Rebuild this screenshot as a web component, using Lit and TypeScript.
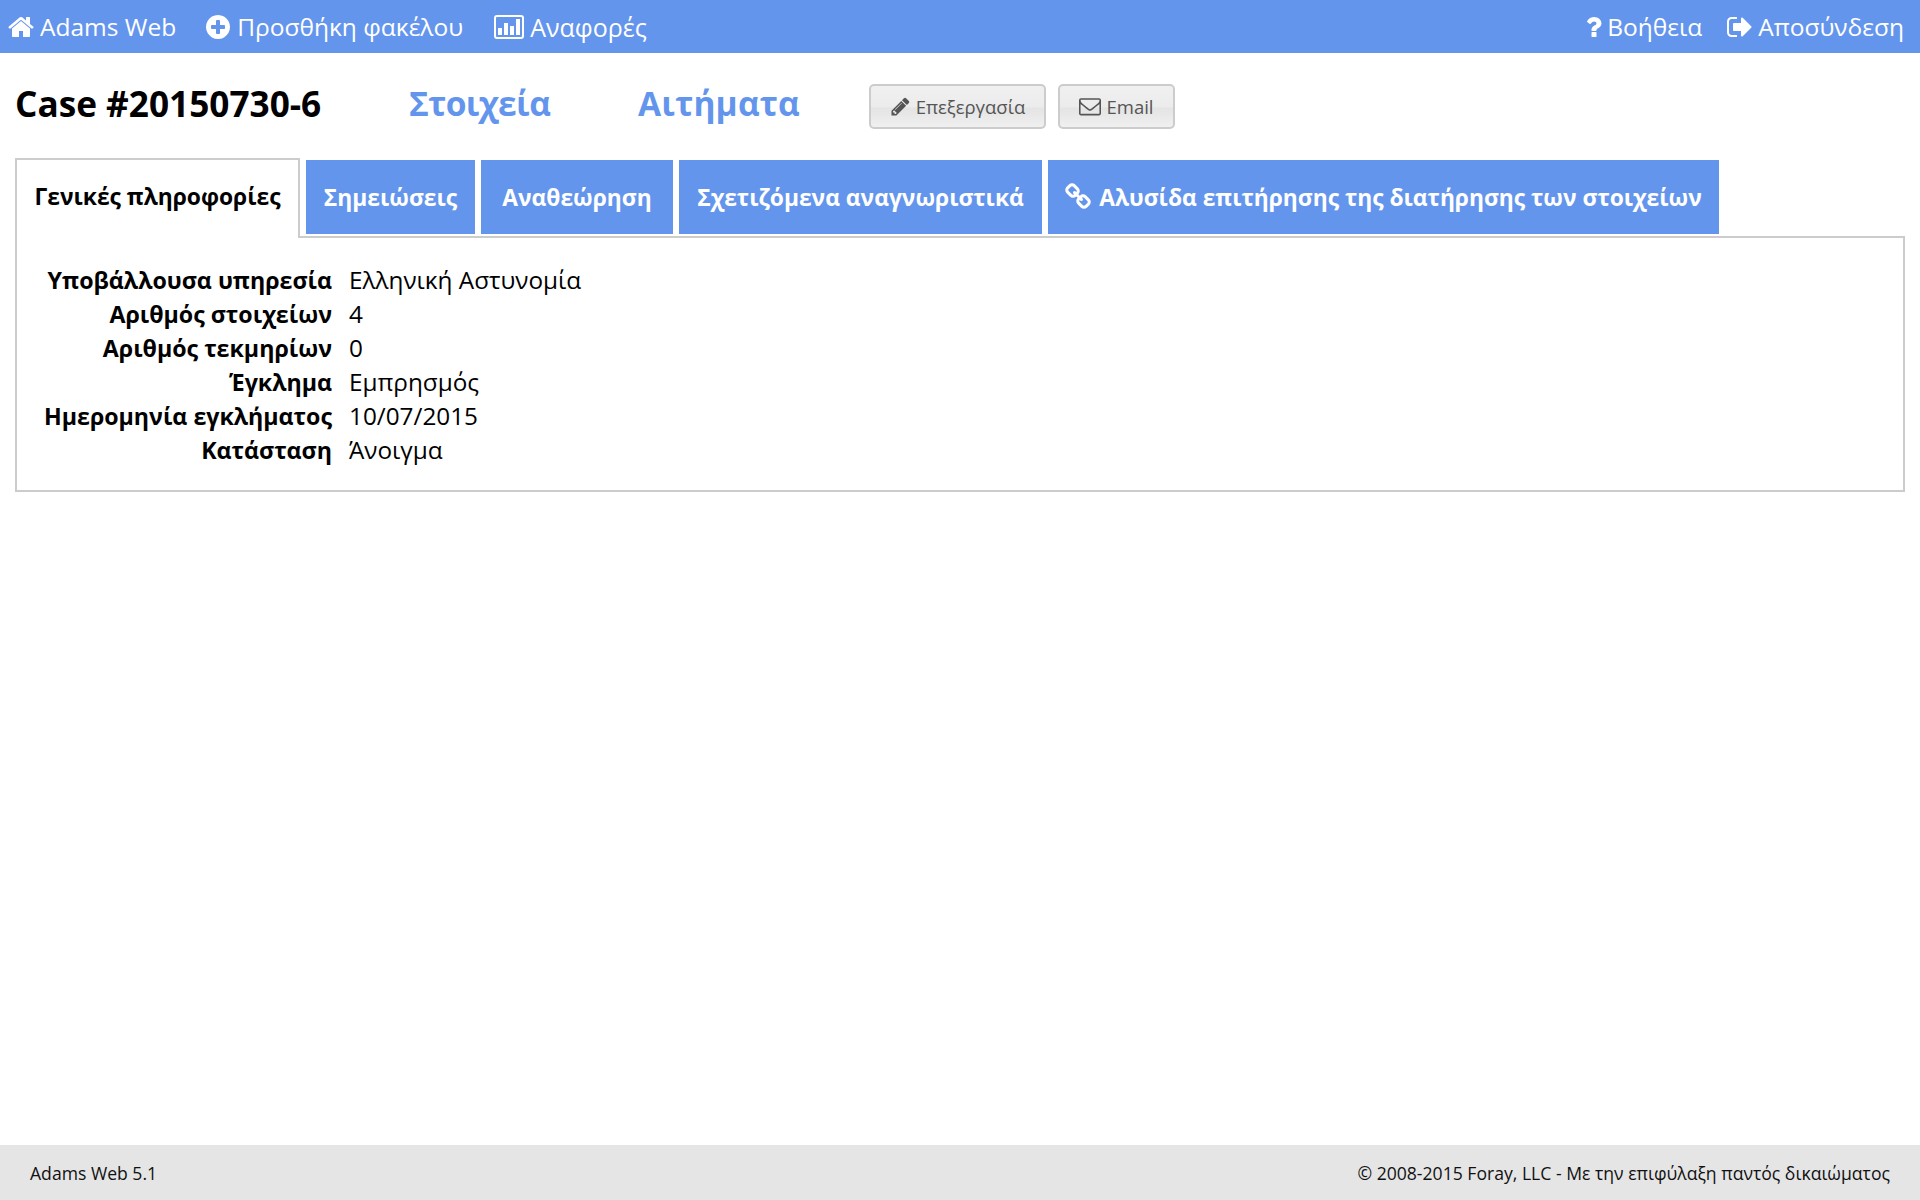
import { LitElement, html, css, svg } from "lit";
import { customElement } from "lit/decorators.js";

const P = {
  home: "M1472 992v480q0 26-19 45t-45 19h-384v-384h-256v384h-384q-26 0-45-19t-19-45v-480q0-1 .5-3t.5-3l575-474 575 474q1 2 1 6zm223-69l-62 74q-8 9-21 11h-3q-13 0-21-7l-692-577-692 577q-12 8-24 7-13-2-21-11l-62-74q-8-10-7-23.5t11-21.5l719-599q32-26 76-26t76 26l244 204v-195q0-14 9-23t23-9h192q14 0 23 9t9 23v408l219 182q10 8 11 21.5t-7 23.5z",
  plus: "M1344 960v-128q0-26-19-45t-45-19h-256v-256q0-26-19-45t-45-19h-128q-26 0-45 19t-19 45v256h-256q-26 0-45 19t-19 45v128q0 26 19 45t45 19h256v256q0 26 19 45t45 19h128q26 0 45-19t19-45v-256h256q26 0 45-19t19-45zm320-64q0 209-103 385.5t-279.5 279.5-385.5 103-385.5-103-279.5-279.5-103-385.5 103-385.5 279.5-279.5 385.5-103 385.5 103 279.5 279.5 103 385.5z",
  question: "M704 1256v240q0 16-12 28t-28 12h-240q-16 0-28-12t-12-28v-240q0-16 12-28t28-12h240q16 0 28 12t12 28zm316-600q0 54-15.500 101t-35 76.500-55 59.500-57.500 43.500-61 35.500q-41 23-68.500 65t-27.500 67q0 17-12 32.500t-28 15.500h-240q-15 0-25.500-18.500t-10.500-37.500v-45q0-83 65-156.500t143-108.500q59-27 84-56t25-76q0-42-46.500-74t-107.500-32q-65 0-108 29-35 25-107 115-13 16-31 16-12 0-25-8l-164-125q-13-10-15.500-25t5.500-28q160-266 464-266 80 0 161 31t146 83 106 127.500 41 158.500z",
  signout: "M704 1440q0 4 1 20t.5 26.500-3 23.500-10 19.500-20.500 6.500h-320q-119 0-203.500-84.500t-84.500-203.500v-704q0-119 84.500-203.500t203.500-84.500h320q13 0 22.500 9.500t9.500 22.500q0 4 1 20t.5 26.500-3 23.500-10 19.500-20.500 6.500h-320q-66 0-113 47t-47 113v704q0 66 47 113t113 47h312l11.500 1 11.500 3 8 5.500 7 9 2 13.500zm928-544q0 26-19 45l-544 544q-19 19-45 19t-45-19-19-45v-288h-448q-26 0-45-19t-19-45v-384q0-26 19-45t45-19h448v-288q0-26 19-45t45-19 45 19l544 544q19 19 19 45z",
  pencil: "M491 1536l91-91-235-235-91 91v107h128v128h107zm523-928q0-22-22-22-10 0-17 7l-542 542q-7 7-7 17 0 22 22 22 10 0 17-7l542-542q7-7 7-17zm-54-192l416 416-832 832h-416v-416zm683 96q0 53-37 90l-166 166-416-416 166-165q36-38 90-38 53 0 91 38l235 234q37 39 37 91z",
  envelope: "M1664 1504v-768q-32 36-69 66-268 206-426 338-51 43-83 67t-86.500 48.500-102.500 24.500h-2q-48 0-102.500-24.500t-86.500-48.500-83-67q-158-132-426-338-37-30-69-66v768q0 13 9.500 22.500t22.500 9.500h1472q13 0 22.500-9.500t9.500-22.500zm0-1051v-24.500l-.5-13-3-12.500-5.500-9-9-7.500-14-2.500h-1472q-13 0-22.500 9.500t-9.500 22.500q0 168 147 284 193 152 401 317 6 5 35 29.500t46 37.500 44.500 31.500 50.500 27.500 43 9h2q20 0 43-9t50.500-27.500 44.500-31.500 46-37.500 35-29.500q208-165 401-317 54-43 100.500-115.500t46.500-131.500zm128-37v1088q0 66-47 113t-113 47h-1472q-66 0-113-47t-47-113v-1088q0-66 47-113t113-47h1472q66 0 113 47t47 113z",
  link: "M1456 1216q0-40-28-68l-208-208q-28-28-68-28-42 0-72 32 3 3 19 18.500t21.500 21.500 15 19 13 25.500 3.500 27.500q0 40-28 68t-68 28q-15 0-27.500-3.500t-25.500-13-19-15-21.500-21.500-18.500-19q-33 31-33 73 0 40 28 68l206 207q27 27 68 27 40 0 68-26l147-146q28-28 28-67zm-703-705q0-40-28-68l-206-207q-28-28-68-28-39 0-68 27l-147 146q-28 28-28 67 0 40 28 68l208 208q27 27 68 27 42 0 72-31-3-3-19-18.500t-21.500-21.500-15-19-13-25.500-3.500-27.500q0-40 28-68t68-28q15 0 27.500 3.500t25.500 13 19 15 21.500 21.500 18.500 19q33-31 33-73zm895 705q0 120-85 203l-147 146q-83 83-203 83-121 0-204-85l-206-207q-83-83-83-203 0-123 88-209l-88-88q-86 88-208 88-120 0-204-84l-208-208q-84-84-84-204t85-203l147-146q83-83 203-83 121 0 204 85l206 207q83 83 83 203 0 123-88 209l88 88q86-88 208-88 120 0 204 84l208 208q84 84 84 204z",
};

const icon = (d: string, w: number, h = w, vb = "0 0 1792 1792") =>
  html`<svg class="ico" width=${w} height=${h} viewBox=${vb} fill="currentColor"><path d=${d}></path></svg>`;

const chart = html`<svg class="ico" width="30" height="24" viewBox="0 0 30 24" fill="currentColor">
  ${svg`<rect x="1" y="1" width="28" height="22" rx="2" fill="none" stroke="currentColor" stroke-width="2"/>
  <rect x="4" y="13" width="4" height="7"/><rect x="10" y="8" width="4" height="12"/><rect x="16" y="11" width="4" height="9"/><rect x="22" y="4" width="4" height="16"/>`}
</svg>`;

const rows = [
  ["Υποβάλλουσα υπηρεσία", "Ελληνική Αστυνομία"],
  ["Αριθμός στοιχείων", "4"],
  ["Αριθμός τεκμηρίων", "0"],
  ["Έγκλημα", "Εμπρησμός"],
  ["Ημερομηνία εγκλήματος", "10/07/2015"],
  ["Κατάσταση", "Άνοιγμα"],
];

@customElement("app-root")
export class AppRoot extends LitElement {
  static styles = css`
    :host {
      display: flex;
      flex-direction: column;
      min-height: 1200px;
      font-family: "Open Sans", "Noto Sans", sans-serif;
      color: #000;
      background: #fff;
    }
    .ico { flex: none; display: block; }
    .top {
      height: 53px;
      background: #6495ed;
      color: #fff;
      display: flex;
      align-items: center;
      justify-content: space-between;
      padding: 0 16px 0 7px;
      font-size: 24.5px;
    }
    .top .grp { display: flex; align-items: center; gap: 28px; }
    .top .right { gap: 23px; }
    .top .it { display: flex; align-items: center; gap: 5px; }
    .top .reports { margin-left: 3px; gap: 6px; font-size: 25px; }
    .head {
      display: flex;
      align-items: center;
      padding: 0 15px 6px;
      height: 105px;
      box-sizing: border-box;
    }
    h1 { margin: 0; font-size: 35.2px; font-weight: 700; line-height: 54px; width: 394px; white-space: nowrap; }
    .lnk { font-size: 33.5px; font-weight: 700; color: #6495ed; line-height: 54px; }
    .l1 { width: 229px; letter-spacing: -0.6px; }
    .l2 { width: 231px; letter-spacing: 0.2px; }
    .btn {
      display: flex;
      align-items: center;
      justify-content: center;
      gap: 5px;
      height: 45px;
      box-sizing: border-box;
      border: 2px solid #ccc;
      border-radius: 5px;
      color: #555;
      font-size: 18.5px;
      background: linear-gradient(#f0f0f0 0%, #ececec 50%, #e4e4e4 55%, #f0f0f0 100%);
      margin-top: 7px;
    }
    .b1 { width: 177px; margin-right: 12px; }
    .b2 { width: 117px; }
    .tabs {
      display: flex;
      align-items: flex-end;
      gap: 6px;
      margin: 0 15px;
      height: 78px;
      position: relative;
      z-index: 1;
    }
    .tab {
      height: 74px;
      margin-bottom: 2px;
      background: #6495ed;
      color: #fff;
      font-weight: 700;
      font-size: 22.8px;
      display: flex;
      align-items: center;
      justify-content: center;
      gap: 6px;
      white-space: nowrap;
      box-sizing: border-box;
    }
    .active {
      height: 80px;
      margin-bottom: -2px;
      background: #fff;
      color: #000;
      border: 2px solid #ccc;
      border-bottom: 0;
      align-items: flex-start;
      padding-top: 21px;
    }
    .panel {
      margin: 0 15px;
      height: 256px;
      box-sizing: border-box;
      border: 2px solid #ccc;
      padding: 25px 0 0 0;
      font-size: 24.3px;
    }
    .row { display: flex; height: 34px; line-height: 34px; white-space: nowrap; }
    .k { width: 315px; text-align: right; font-weight: 700; font-size: 23.2px; }
    .v { margin-left: 17px; }
    .foot {
      margin-top: auto;
      height: 55px;
      background: #e5e5e5;
      display: flex;
      align-items: center;
      justify-content: space-between;
      padding: 0 30px;
      font-size: 17.6px;
      color: #111;
    }
  `;

  render() {
    return html`
      <div class="top">
        <div class="grp">
          <div class="it">${icon(P.home, 28)}<span>Adams Web</span></div>
          <div class="it">${icon(P.plus, 28)}<span>Προσθήκη φακέλου</span></div>
          <div class="it reports">${chart}<span>Αναφορές</span></div>
        </div>
        <div class="grp right">
          <div class="it">${icon(P.question, 17, 28, "0 0 1024 1792")}<span>Βοήθεια</span></div>
          <div class="it">${icon(P.signout, 28, 28, "0 0 1664 1792")}<span>Αποσύνδεση</span></div>
        </div>
      </div>
      <div class="head">
        <h1>Case #20150730-6</h1>
        <div class="lnk l1">Στοιχεία</div>
        <div class="lnk l2">Αιτήματα</div>
        <div class="btn b1">${icon(P.pencil, 21)}<span>Επεξεργασία</span></div>
        <div class="btn b2">${icon(P.envelope, 22)}<span>Email</span></div>
      </div>
      <div class="tabs">
        <div class="tab active" style="width:285px">Γενικές πληροφορίες</div>
        <div class="tab" style="width:169px">Σημειώσεις</div>
        <div class="tab" style="width:192px">Αναθεώρηση</div>
        <div class="tab" style="width:363px">Σχετιζόμενα αναγνωριστικά</div>
        <div class="tab" style="width:671px">${icon(P.link, 28)}<span>Αλυσίδα επιτήρησης της διατήρησης των στοιχείων</span></div>
      </div>
      <div class="panel">
        ${rows.map(([k, v]) => html`<div class="row"><div class="k">${k}</div><div class="v">${v}</div></div>`)}
      </div>
      <div class="foot"><span>Adams Web 5.1</span><span>© 2008-2015 Foray, LLC - Με την επιφύλαξη παντός δικαιώματος</span></div>
    `;
  }
}
